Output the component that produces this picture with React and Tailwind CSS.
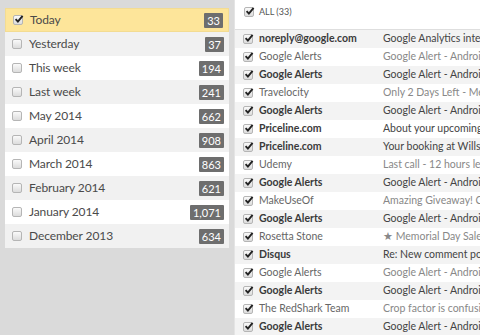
import React from 'react';

const FOLDERS = [
  { label: 'Today', count: '33', active: true },
  { label: 'Yesterday', count: '37' },
  { label: 'This week', count: '194' },
  { label: 'Last week', count: '241' },
  { label: 'May 2014', count: '662' },
  { label: 'April 2014', count: '908' },
  { label: 'March 2014', count: '863' },
  { label: 'February 2014', count: '621' },
  { label: 'January 2014', count: '1,071' },
  { label: 'December 2013', count: '634' },
];

const MAILS = [
  { from: 'noreply@google.com', subject: 'Google Analytics intelligence Alert', bold: true },
  { from: 'Google Alerts', subject: 'Google Alert - Android' },
  { from: 'Google Alerts', subject: 'Google Alert - Android', bold: true },
  { from: 'Travelocity', subject: 'Only 2 Days Left - Memorial Day' },
  { from: 'Google Alerts', subject: 'Google Alert - Android', bold: true },
  { from: 'Priceline.com', subject: 'About your upcoming trip', bold: true },
  { from: 'Priceline.com', subject: 'Your booking at Wills Hotel', bold: true },
  { from: 'Udemy', subject: 'Last call - 12 hours left' },
  { from: 'Google Alerts', subject: 'Google Alert - Android', bold: true },
  { from: 'MakeUseOf', subject: 'Amazing Giveaway! Can you' },
  { from: 'Google Alerts', subject: 'Google Alert - Android', bold: true },
  { from: 'Rosetta Stone', subject: '★ Memorial Day Sale - Save' },
  { from: 'Disqus', subject: 'Re: New comment posted', bold: true },
  { from: 'Google Alerts', subject: 'Google Alert - Android' },
  { from: 'Google Alerts', subject: 'Google Alert - Android', bold: true },
  { from: 'The RedShark Team', subject: 'Crop factor is confusing' },
  { from: 'Google Alerts', subject: 'Google Alert - Android', bold: true },
];

function Check({ checked }) {
  return (
    <span className="relative w-[10px] h-[10px] flex-shrink-0 rounded-[2px] border border-[#b5b5b5] bg-gradient-to-b from-[#fafafa] to-[#dcdcdc]">
      {checked && (
        <svg viewBox="0 0 10 10" className="absolute left-[0px] top-[-2px] w-[10px] h-[10px]">
          <path d="M1.6 5.2 L3.9 7.6 L8.6 1.8" fill="none" stroke="#222" strokeWidth="1.9" />
        </svg>
      )}
    </span>
  );
}

export default function App() {
  return (
    <div className="flex w-[480px] h-[335px] overflow-hidden font-['Lato','Liberation_Sans',sans-serif]">
      {/* 폴더 목록 */}
      <div className="w-[235px] h-full bg-[#dadada] pt-[8px] pl-[5px] flex-shrink-0 border-r border-[#e4e4e4]">
        <div className="w-[224px] flex flex-col">
          {FOLDERS.map((f, i) => (
            <div
              key={f.label}
              className={`h-[24px] flex items-center pl-[7px] pr-[5px] ${
                f.active
                  ? 'bg-[#fde59a] border border-[#f3dc92] pl-[6px] pr-[4px]'
                  : i % 2 === 1 ? 'bg-[#f1f1f1]' : 'bg-white'
              }`}
            >
              <Check checked={f.active} />
              <span className="ml-[7px] flex-1 text-[12px] text-[#4a4a4a] tracking-[-0.1px]">{f.label}</span>
              <span className="h-[15px] px-[3px] flex items-center bg-[#6e6e6e] text-white text-[11px] leading-none rounded-[1px]">
                {f.count}
              </span>
            </div>
          ))}
        </div>
      </div>

      {/* 메일 목록 */}
      <div className="flex-1 min-w-0 bg-white flex flex-col">
        <div className="h-[30px] flex-shrink-0 flex items-start pt-[7px] pl-[9px] border-b border-[#dedede]">
          <Check checked />
          <span className="ml-[5px] text-[9px] leading-[10px] text-[#555]">ALL (33)</span>
        </div>
        {MAILS.map((m, i) => (
          <div
            key={i}
            className={`h-[18px] flex-shrink-0 flex items-center pl-[8px] whitespace-nowrap overflow-hidden text-[10.5px] ${
              i % 2 === 0 ? 'bg-[#f3f3f3]' : 'bg-white'
            }`}
          >
            <Check checked />
            <span className={`ml-[6px] w-[124px] flex-shrink-0 ${m.bold ? 'font-bold text-[#3a3a3a]' : 'text-[#666]'}`}>
              {m.from}
            </span>
            <span className={m.bold ? 'text-[#444]' : 'text-[#888]'}>{m.subject}</span>
          </div>
        ))}
      </div>
    </div>
  );
}
